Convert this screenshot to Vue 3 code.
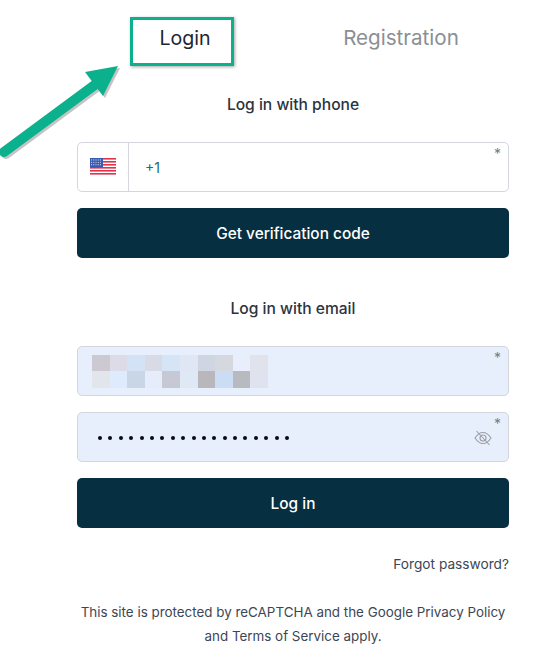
<template>
  <div class="page">
    <div class="tabs">
      <div class="tab active">Login</div>
      <div class="tab">Registration</div>
    </div>

    <!-- annotation drawn over the screenshot -->
    <div class="callout"></div>
    <svg class="arrow" width="125" height="100" viewBox="0 0 125 100">
      <line x1="4" y1="92" x2="96" y2="24" stroke="#3c3c3c" stroke-opacity="0.3" stroke-width="10" stroke-linecap="round" transform="translate(2 2)" />
      <path d="M85 12 L118 6 L103 36 Z" fill="#3c3c3c" fill-opacity="0.3" transform="translate(2 2)" />
      <line x1="4" y1="92" x2="96" y2="24" stroke="#0bb08c" stroke-width="10" stroke-linecap="round" />
      <path d="M85 12 L118 6 L103 36 Z" fill="#0bb08c" />
    </svg>

    <h2 class="title phone-title">Log in with phone</h2>
    <div class="field phone">
      <div class="flag-box">
        <svg width="26" height="18" viewBox="0 0 26 18">
          <rect width="26" height="18" fill="#fff" />
          <rect v-for="y in [0, 3, 6, 9, 12, 15]" :key="y" :y="y" width="26" height="1.6" fill="#e0334c" />
          <rect width="13" height="9.5" fill="#3c5bb0" />
          <template v-for="r in 3" :key="r">
            <circle v-for="c in 5" :key="c" :cx="c * 2.2 - 0.6" :cy="r * 2.4 - 0.5" r="0.6" fill="#c9d4f0" />
          </template>
        </svg>
      </div>
      <span class="code">+1</span>
      <span class="star">*</span>
    </div>
    <button class="btn">Get verification code</button>

    <h2 class="title email-title">Log in with email</h2>
    <div class="field filled">
      <div class="blur">
        <i v-for="(c, i) in cells" :key="i" :style="{ background: c }"></i>
      </div>
      <span class="star">*</span>
    </div>
    <div class="field filled pass">
      <div class="dots">
        <i v-for="n in 19" :key="n"></i>
      </div>
      <svg class="eye" width="20" height="16" viewBox="0 0 20 16" fill="none" stroke="#9a9fa6" stroke-width="1.1">
        <path d="M2 8 C5 3.5 7.5 2.5 10 2.5 C12.5 2.5 15 3.5 18 8 C15 12.5 12.5 13.5 10 13.5 C7.5 13.5 5 12.5 2 8 Z" />
        <circle cx="10" cy="8" r="3" />
        <line x1="3.5" y1="1" x2="16.5" y2="15" />
      </svg>
      <span class="star">*</span>
    </div>
    <button class="btn login-btn">Log in</button>

    <a class="forgot">Forgot password?</a>

    <p class="note">This site is protected by reCAPTCHA and the Google Privacy Policy<br />and Terms of Service apply.</p>
  </div>
</template>

<script setup>
const cells = [
  '#cdc9d2', '#dddbe8', '#d4e2f5', '#d8dbe6', '#d6e5f6', '#dfe6f4', '#cfd6e2', '#d6d8e0', '#e8eefb', '#e0e3ec',
  '#e2e5ea', '#deebfc', '#c9d6e6', '#e6ecf9', '#c6c9d3', '#dfe8f5', '#b9b6bc', '#cbdcf5', '#b7bbc0', '#dfe3ef'
]
</script>

<style>
body {
  background: #fff;
}
</style>

<style scoped>
.page {
  position: relative;
  width: 539px;
  height: 672px;
  box-sizing: border-box;
  padding: 0 30px 0 77px;
  font-family: Inter, "Open Sans", sans-serif;
  color: #2b3440;
  overflow: hidden;
}

.tabs {
  display: flex;
  padding-top: 23px;
}

.tab {
  flex: 1;
  text-align: center;
  font-size: 20.6px;
  line-height: 30px;
  color: #8a8f94;
}

.tab.active {
  font-size: 19.6px;
  line-height: 31px;
  color: #1d2733;
}

.callout {
  position: absolute;
  left: 130px;
  top: 17px;
  width: 104px;
  height: 49px;
  box-sizing: border-box;
  border: 3px solid #0bb08c;
  box-shadow: 1px 1px 3px rgba(0, 0, 0, 0.35);
}

.arrow {
  position: absolute;
  left: 0;
  top: 60px;
}

.title {
  margin: 0;
  text-align: center;
  font-size: 15.6px;
  font-weight: 500;
  line-height: 20px;
}

.phone-title {
  margin-top: 41px;
}

.email-title {
  margin-top: 41px;
}

.field {
  position: relative;
  height: 50px;
  box-sizing: border-box;
  border: 1px solid #d4d6de;
  border-radius: 5px;
  display: flex;
  align-items: center;
}

.phone {
  margin-top: 27px;
}

.flag-box {
  width: 50px;
  height: 100%;
  border-right: 1px solid #d4d6de;
  display: flex;
  align-items: center;
  justify-content: center;
}

.code {
  margin-left: 16px;
  font-size: 14px;
  color: #1f6a7c;
}

.star {
  position: absolute;
  right: 7px;
  top: 3px;
  font-size: 14px;
  line-height: 16px;
  color: #7a7a80;
}

.btn {
  display: block;
  width: 100%;
  height: 50px;
  margin-top: 16px;
  border: none;
  border-radius: 5px;
  background: #062f41;
  color: #fff;
  font-family: inherit;
  font-size: 15.4px;
  font-weight: 500;
}

.filled {
  margin-top: 16px;
  background: #e8effc;
}

.email-title + .filled {
  margin-top: 27px;
}

.blur {
  display: grid;
  grid-template-columns: repeat(10, 17.6px);
  grid-auto-rows: 16.5px;
  margin-left: 14px;
}

.blur i,
.dots i {
  display: block;
}

.dots {
  display: flex;
  gap: 6.4px;
  margin-left: 20px;
  padding-top: 2px;
}

.dots i {
  width: 4px;
  height: 4px;
  border-radius: 50%;
  background: #0a0a14;
}

.eye {
  position: absolute;
  right: 15px;
  top: 17px;
}

.login-btn {
  margin-top: 16px;
}

.forgot {
  display: block;
  margin-top: 26px;
  text-align: right;
  font-size: 13.7px;
  line-height: 20px;
  color: #3c4654;
}

.note {
  margin: 26px -10px 0;
  text-align: center;
  font-size: 13.4px;
  line-height: 24px;
  color: #3c4654;
}
</style>
